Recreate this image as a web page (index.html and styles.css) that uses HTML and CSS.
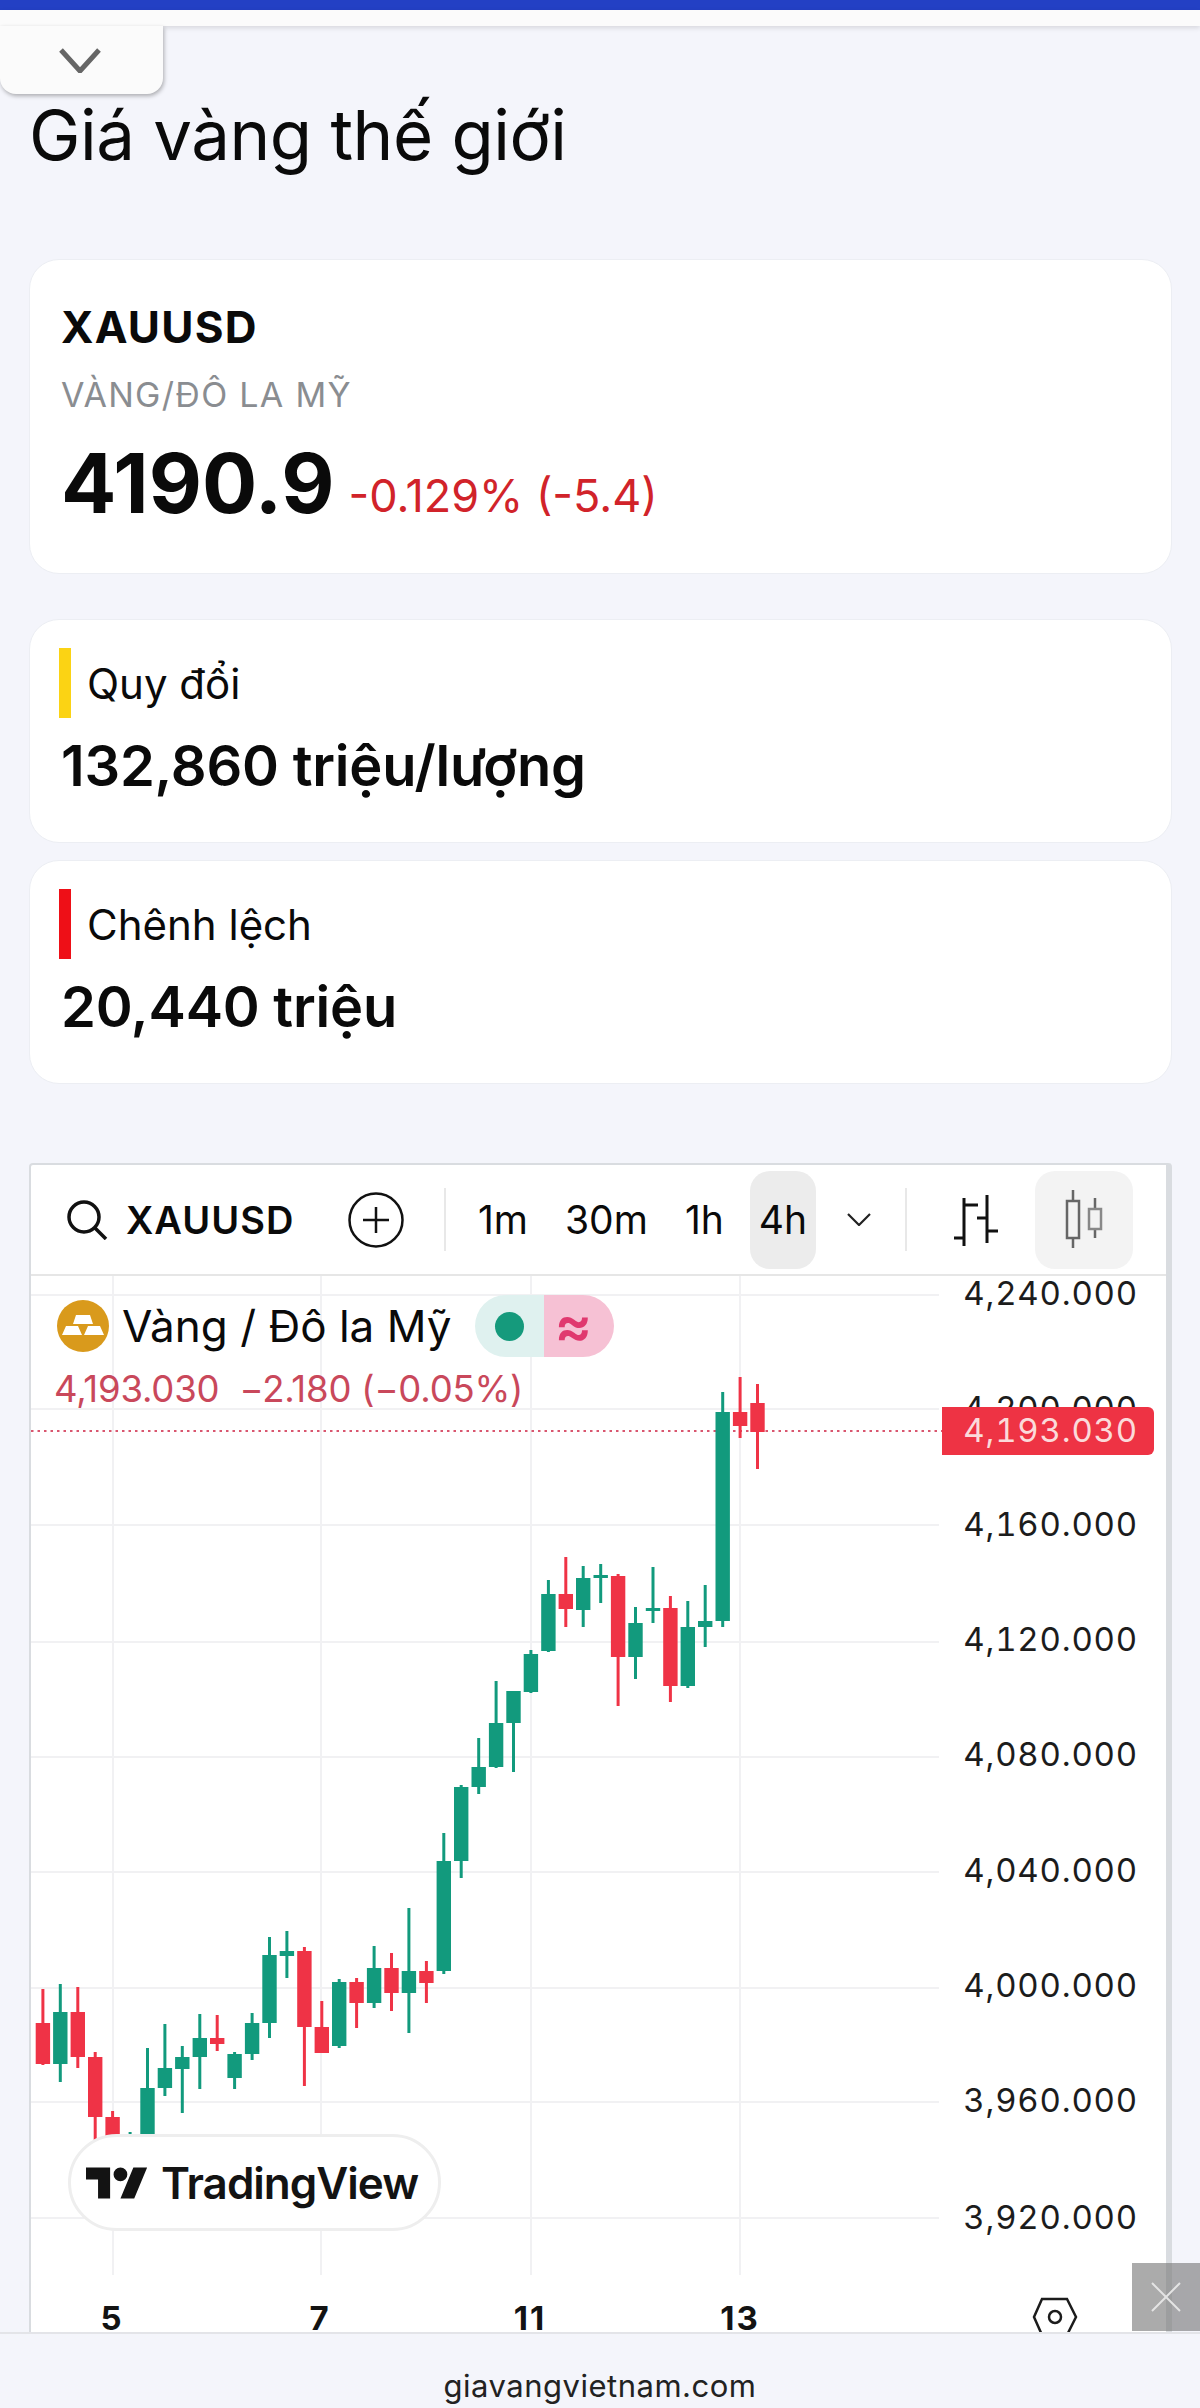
FILE: index.html
```html
<!DOCTYPE html>
<html lang="vi">
<head>
  <meta charset="UTF-8">
  <meta name="viewport" content="width=device-width, initial-scale=1">
  <title>Giá vàng thế giới</title>
  <link rel="stylesheet" href="styles.css">
</head>
<body>
  <div class="top-bar"></div>
  <div class="top-strip"></div>
  <div class="drop-tab">
    <svg width="42" height="25" viewBox="0 0 42 25"><path d="M2 2 L21 23 L40 2" fill="none" stroke="#666" stroke-width="5"/></svg>
  </div>

  <main class="page">
    <h1>Giá vàng thế giới</h1>

    <section class="card quote">
      <div class="symbol">XAUUSD</div>
      <div class="symbol-name">VÀNG/ĐÔ LA MỸ</div>
      <div class="price-row">
        <span class="price">4190.9</span>
        <span class="change">-0.129% (-5.4)</span>
      </div>
    </section>

    <section class="card stat first">
      <div class="stat-label"><span class="mark yellow"></span>Quy đổi</div>
      <div class="stat-value">132,860 triệu/lượng</div>
    </section>

    <section class="card stat">
      <div class="stat-label"><span class="mark red"></span>Chênh lệch</div>
      <div class="stat-value">20,440 triệu</div>
    </section>

    <section class="chart">
      <div class="toolbar">
        <svg class="search-icon" width="42" height="40" viewBox="0 0 42 40"><circle cx="18" cy="17" r="15" fill="none" stroke="#111" stroke-width="3.5"/><path d="M29 28 L40 39" stroke="#111" stroke-width="3.5"/></svg>
        <span class="tb-symbol">XAUUSD</span>
        <svg class="plus-icon" width="56" height="56" viewBox="0 0 56 56"><circle cx="28" cy="28" r="26.5" fill="none" stroke="#111" stroke-width="2.5"/><path d="M15 28 H41 M28 15 V41" stroke="#111" stroke-width="2.5"/></svg>
        <span class="tb-sep sep-one"></span>
        <div class="intervals">
          <span class="iv">1m</span>
          <span class="iv">30m</span>
          <span class="iv">1h</span>
          <span class="iv active">4h</span>
        </div>
        <svg class="iv-more" width="24" height="13" viewBox="0 0 24 13"><path d="M1 1 L12 12 L23 1" fill="none" stroke="#222" stroke-width="2.2"/></svg>
        <span class="tb-sep sep-two"></span>
        <svg class="bars-icon" width="46" height="52" viewBox="0 0 46 52"><path d="M11 4 V52 M11 11 H25 M1 44 H11 M34 1 V49 M24 24 H34 M34 37 H45" fill="none" stroke="#111" stroke-width="3"/></svg>
        <div class="candle-btn">
          <svg width="40" height="60" viewBox="0 0 40 60"><path d="M9 0 V11 M9 48 V58 M31 8 V19 M31 39 V48" fill="none" stroke="#666" stroke-width="2.5"/><rect x="3" y="11" width="12" height="37" fill="none" stroke="#666" stroke-width="2.5"/><rect x="25" y="19" width="12" height="20" fill="none" stroke="#888" stroke-width="2.5"/></svg>
        </div>
      </div>

      <div class="plot">
        <!-- viewBox uses the page's own pixel coordinates -->
        <svg class="plot-svg" width="1135" height="1056" viewBox="31 1276 1135 1056">
          <g class="grid">
            <line x1="113" y1="1276" x2="113" y2="2275"/>
            <line x1="321" y1="1276" x2="321" y2="2275"/>
            <line x1="531" y1="1276" x2="531" y2="2275"/>
            <line x1="740" y1="1276" x2="740" y2="2275"/>
            <line x1="31" y1="1295" x2="939" y2="1295"/>
            <line x1="31" y1="1409" x2="939" y2="1409"/>
            <line x1="31" y1="1525" x2="939" y2="1525"/>
            <line x1="31" y1="1642" x2="939" y2="1642"/>
            <line x1="31" y1="1757" x2="939" y2="1757"/>
            <line x1="31" y1="1872" x2="939" y2="1872"/>
            <line x1="31" y1="1988" x2="939" y2="1988"/>
            <line x1="31" y1="2102" x2="939" y2="2102"/>
            <line x1="31" y1="2218" x2="939" y2="2218"/>
          </g>

          <line class="last-price" x1="31" y1="1431" x2="942" y2="1431"/>

          <g class="dn"><line x1="42.9" y1="1989" x2="42.9" y2="2065"/><rect x="35.7" y="2023" width="14.4" height="41"/></g>
          <g class="up"><line x1="60.3" y1="1984" x2="60.3" y2="2082"/><rect x="53.1" y="2012" width="14.4" height="52"/></g>
          <g class="dn"><line x1="77.8" y1="1987" x2="77.8" y2="2068"/><rect x="70.6" y="2012" width="14.4" height="45"/></g>
          <g class="dn"><line x1="95.2" y1="2052" x2="95.2" y2="2140"/><rect x="88" y="2057" width="14.4" height="60"/></g>
          <g class="dn"><line x1="112.6" y1="2111" x2="112.6" y2="2140"/><rect x="105.4" y="2117" width="14.4" height="23"/></g>
          <g class="up"><line x1="130.1" y1="2132" x2="130.1" y2="2140"/></g>
          <g class="up"><line x1="147.5" y1="2048" x2="147.5" y2="2140"/><rect x="140.3" y="2088" width="14.4" height="52"/></g>
          <g class="up"><line x1="164.9" y1="2024" x2="164.9" y2="2096"/><rect x="157.7" y="2068" width="14.4" height="20"/></g>
          <g class="up"><line x1="182.3" y1="2046" x2="182.3" y2="2113"/><rect x="175.1" y="2057" width="14.4" height="12"/></g>
          <g class="up"><line x1="199.8" y1="2014" x2="199.8" y2="2089"/><rect x="192.6" y="2038" width="14.4" height="19"/></g>
          <g class="dn"><line x1="217.2" y1="2015" x2="217.2" y2="2051"/><rect x="210" y="2038" width="14.4" height="6"/></g>
          <g class="up"><line x1="234.6" y1="2052" x2="234.6" y2="2089"/><rect x="227.4" y="2054" width="14.4" height="24"/></g>
          <g class="up"><line x1="252.1" y1="2013" x2="252.1" y2="2060"/><rect x="244.9" y="2023" width="14.4" height="31"/></g>
          <g class="up"><line x1="269.5" y1="1937" x2="269.5" y2="2038"/><rect x="262.3" y="1955" width="14.4" height="68"/></g>
          <g class="up"><line x1="286.9" y1="1931" x2="286.9" y2="1978"/><rect x="279.7" y="1951" width="14.4" height="5"/></g>
          <g class="dn"><line x1="304.4" y1="1947" x2="304.4" y2="2086"/><rect x="297.2" y="1951" width="14.4" height="76"/></g>
          <g class="dn"><line x1="321.8" y1="2001" x2="321.8" y2="2053"/><rect x="314.6" y="2027" width="14.4" height="26"/></g>
          <g class="up"><line x1="339.2" y1="1979" x2="339.2" y2="2048"/><rect x="332" y="1982" width="14.4" height="64"/></g>
          <g class="dn"><line x1="356.6" y1="1978" x2="356.6" y2="2028"/><rect x="349.4" y="1982" width="14.4" height="21"/></g>
          <g class="up"><line x1="374.1" y1="1946" x2="374.1" y2="2008"/><rect x="366.9" y="1968" width="14.4" height="35"/></g>
          <g class="dn"><line x1="391.5" y1="1953" x2="391.5" y2="2011"/><rect x="384.3" y="1968" width="14.4" height="25"/></g>
          <g class="up"><line x1="408.9" y1="1908" x2="408.9" y2="2033"/><rect x="401.7" y="1971" width="14.4" height="22"/></g>
          <g class="dn"><line x1="426.4" y1="1961" x2="426.4" y2="2003"/><rect x="419.2" y="1971" width="14.4" height="12"/></g>
          <g class="up"><line x1="443.8" y1="1833" x2="443.8" y2="1974"/><rect x="436.6" y="1861" width="14.4" height="110"/></g>
          <g class="up"><line x1="461.2" y1="1785" x2="461.2" y2="1878"/><rect x="454" y="1787" width="14.4" height="74"/></g>
          <g class="up"><line x1="478.7" y1="1738" x2="478.7" y2="1794"/><rect x="471.5" y="1767" width="14.4" height="20"/></g>
          <g class="up"><line x1="496.1" y1="1681" x2="496.1" y2="1768"/><rect x="488.9" y="1723" width="14.4" height="44"/></g>
          <g class="up"><line x1="513.5" y1="1691" x2="513.5" y2="1772"/><rect x="506.3" y="1691" width="14.4" height="32"/></g>
          <g class="up"><line x1="530.9" y1="1650" x2="530.9" y2="1693"/><rect x="523.7" y="1654" width="14.4" height="38"/></g>
          <g class="up"><line x1="548.4" y1="1580" x2="548.4" y2="1652"/><rect x="541.2" y="1594" width="14.4" height="57"/></g>
          <g class="dn"><line x1="565.8" y1="1557" x2="565.8" y2="1627"/><rect x="558.6" y="1594" width="14.4" height="15"/></g>
          <g class="up"><line x1="583.2" y1="1566" x2="583.2" y2="1627"/><rect x="576" y="1578" width="14.4" height="32"/></g>
          <g class="up"><line x1="600.7" y1="1564" x2="600.7" y2="1603"/><rect x="593.5" y="1575" width="14.4" height="3"/></g>
          <g class="dn"><line x1="618.1" y1="1574" x2="618.1" y2="1706"/><rect x="610.9" y="1576" width="14.4" height="81"/></g>
          <g class="up"><line x1="635.5" y1="1607" x2="635.5" y2="1679"/><rect x="628.3" y="1623" width="14.4" height="34"/></g>
          <g class="up"><line x1="653" y1="1567" x2="653" y2="1623"/><rect x="645.8" y="1608" width="14.4" height="3"/></g>
          <g class="dn"><line x1="670.4" y1="1596" x2="670.4" y2="1702"/><rect x="663.2" y="1608" width="14.4" height="78"/></g>
          <g class="up"><line x1="687.8" y1="1601" x2="687.8" y2="1688"/><rect x="680.6" y="1627" width="14.4" height="59"/></g>
          <g class="up"><line x1="705.2" y1="1585" x2="705.2" y2="1647"/><rect x="698" y="1621" width="14.4" height="6"/></g>
          <g class="up"><line x1="722.7" y1="1392" x2="722.7" y2="1627"/><rect x="715.5" y="1412" width="14.4" height="209"/></g>
          <g class="dn"><line x1="740.1" y1="1377" x2="740.1" y2="1438"/><rect x="732.9" y="1412" width="14.4" height="14"/></g>
          <g class="dn"><line x1="757.5" y1="1384" x2="757.5" y2="1469"/><rect x="750.3" y="1403" width="14.4" height="29"/></g>

          <g class="axis-y">
            <text x="1138" y="1305">4,240.000</text>
            <text x="1138" y="1420">4,200.000</text>
            <text x="1138" y="1536">4,160.000</text>
            <text x="1138" y="1651">4,120.000</text>
            <text x="1138" y="1766">4,080.000</text>
            <text x="1138" y="1882">4,040.000</text>
            <text x="1138" y="1997">4,000.000</text>
            <text x="1138" y="2112">3,960.000</text>
            <text x="1138" y="2229">3,920.000</text>
          </g>

          <g class="axis-x">
            <text x="112" y="2330">5</text>
            <text x="320" y="2330">7</text>
            <text x="530" y="2330">11</text>
            <text x="740" y="2330">13</text>
          </g>

          <path class="gear" d="M1042 2299 H1067 L1076 2317 L1067 2335 H1042 L1034 2317 Z"/>
          <circle class="gear" cx="1055" cy="2317" r="6"/>
        </svg>

        <div class="legend">
          <div class="legend-top">
            <svg class="gold-icon" width="52" height="52" viewBox="0 0 52 52">
              <circle cx="26" cy="26" r="26" fill="#d99a1c"/>
              <path d="M19 15 H33 L36 24 H16 Z M9 26 H21 L25 35 H5 Z M31 26 H43 L47 35 H27 Z" fill="#fff"/>
            </svg>
            <span class="legend-title">Vàng / Đô la Mỹ</span>
            <div class="status-pill">
              <span class="pill-left"><i class="dot"></i></span>
              <span class="pill-right">≈</span>
            </div>
          </div>
          <div class="legend-price">4,193.030 &nbsp;−2.180 (−0.05%)</div>
        </div>

        <div class="price-tag">4,193.030</div>

        <div class="tv-badge">
          <svg width="62" height="32" viewBox="0 4 36 18"><path d="M14 22H7V11H0V4h14v18ZM28 22h-8l7.5-18h8L28 22Z M24 8a4 4 0 1 1-8 0a4 4 0 0 1 8 0Z" fill="#131313"/></svg>
          <span>TradingView</span>
        </div>
      </div>
    </section>
  </main>

  <div class="ad-close">
    <svg width="30" height="30" viewBox="0 0 30 30"><path d="M1 1 L29 29 M29 1 L1 29" stroke="#e4e4e4" stroke-width="2"/></svg>
  </div>

  <footer class="footer">giavangvietnam.com</footer>
</body>
</html>
```

FILE: styles.css
```css
/* Reset default margin and padding */
* {
  box-sizing: border-box;
  margin: 0;
  padding: 0;
}

body {
  font-family: Inter, "Liberation Sans", sans-serif;
  background-color: #f4f5fb;
  color: #0a0a0a;
  width: 1200px;
  height: 2408px;
  overflow: hidden;
  position: relative;
}

.top-bar {
  height: 10px;
  background-color: #2340c4;
}

.top-strip {
  height: 16px;
  background-color: #fbfbfb;
  box-shadow: 0 2px 5px rgba(0, 0, 0, 0.12);
}

/* collapsed header tab, sits over the page */
.drop-tab {
  position: absolute;
  left: 0;
  top: 26px;
  width: 163px;
  height: 68px;
  background-color: #fbfbfb;
  border-radius: 0 0 16px 16px;
  box-shadow: 1px 2px 4px rgba(0, 0, 0, 0.3);
  display: flex;
  justify-content: center;
  align-items: center;
  padding-right: 4px;
}

.page {
  padding: 0 28px 0 29px;
}

h1 {
  font-size: 69px;
  font-weight: 400;
  line-height: 80px;
  margin-top: 69px;
  letter-spacing: -0.5px;
}

.card {
  background: white;
  border-radius: 30px;
  border: 1px solid #eceef3;
  padding-left: 31px;
}

.quote {
  margin-top: 84px;
  height: 315px;
}

.symbol {
  font-size: 44px;
  font-weight: 700;
  line-height: 52px;
  margin-top: 41px;
  letter-spacing: 1.2px;
}

.symbol-name {
  font-size: 34px;
  color: #8a8d91;
  line-height: 40px;
  margin-top: 22px;
  letter-spacing: 1.3px;
}

.price-row {
  display: flex;
  align-items: flex-start;
  gap: 14px;
  margin-top: 24px;
}

.price {
  font-size: 82px;
  font-weight: 700;
  line-height: 90px;
}

.change {
  font-size: 45px;
  line-height: 54px;
  margin-top: 30px;
  color: #d1232a;
}

.stat {
  height: 224px;
  margin-top: 17px;
}

.stat.first {
  margin-top: 45px;
}

.stat-label {
  display: flex;
  align-items: center;
  font-size: 42px;
  height: 70px;
  margin-top: 28px;
  margin-left: -2px;
}

.mark {
  width: 12px;
  height: 70px;
  margin-right: 16px;
}

.mark.yellow {
  background-color: #fbd314;
}

.mark.red {
  background-color: #ee0f17;
}

.stat-value {
  font-size: 56px;
  font-weight: 600;
  line-height: 64px;
  margin-top: 16px;
  letter-spacing: -0.2px;
}

.chart {
  margin-top: 79px;
  height: 1169px;
  background: white;
  border: solid #d9dce0;
  border-width: 2px 6px 0 2px;
  border-radius: 4px 4px 0 0;
}

.toolbar {
  height: 111px;
  border-bottom: 2px solid #e6e6e6;
  display: flex;
  align-items: center;
  padding-left: 35px;
  font-size: 39px;
}

.tb-symbol {
  font-weight: 600;
  font-size: 38px;
  margin-left: 18px;
  width: 170px;
  letter-spacing: 1px;
}

.plus-icon {
  margin-left: 52px;
}

.tb-sep {
  width: 2px;
  height: 63px;
  background-color: #e8e8e8;
}

.sep-one {
  margin-left: 40px;
}

.intervals {
  display: flex;
  align-items: center;
  gap: 15px;
  margin-left: 21px;
}

.iv {
  height: 98px;
  line-height: 98px;
  padding: 0 11px;
  border-radius: 20px;
}

.iv.active {
  padding: 0 9px;
  background-color: #ececec;
}

.iv-more {
  margin-left: 31px;
}

.sep-two {
  margin-left: 34px;
}

.bars-icon {
  margin-left: 46px;
}

.candle-btn {
  width: 98px;
  height: 98px;
  margin-left: 36px;
  background-color: #f3f3f3;
  border-radius: 20px;
  display: flex;
  justify-content: center;
  align-items: center;
}

/* chart canvas: everything below is placed over the drawing */
.plot {
  position: relative;
  height: 1056px;
  overflow: hidden;
}

.plot-svg {
  display: block;
}

.grid line {
  stroke: #f1f1f3;
  stroke-width: 2;
}

.last-price {
  stroke: #d9566f;
  stroke-width: 2;
  stroke-dasharray: 2.5 4;
}

.up line,
.dn line {
  stroke-width: 3;
}

.up line {
  stroke: #129a7d;
}

.up rect {
  fill: #129a7d;
}

.dn line {
  stroke: #ef3346;
}

.dn rect {
  fill: #ef3346;
}

.axis-y text {
  font-size: 33px;
  font-variant-numeric: tabular-nums;
  letter-spacing: 0.8px;
  text-anchor: end;
  fill: #1c1c1c;
}

.axis-x text {
  font-size: 33px;
  font-weight: 700;
  letter-spacing: 2px;
  text-anchor: middle;
  fill: #131313;
}

.gear {
  fill: none;
  stroke: #1c1c1c;
  stroke-width: 2.5;
}

.legend {
  position: absolute;
  left: 26px;
  top: 19px;
}

.legend-top {
  display: flex;
  align-items: center;
}

.legend-title {
  font-size: 44px;
  margin-left: 13px;
}

.status-pill {
  display: flex;
  height: 62px;
  margin-left: 24px;
  border-radius: 31px;
  overflow: hidden;
}

.pill-left {
  width: 69px;
  background-color: #dff1ef;
  display: flex;
  align-items: center;
  justify-content: center;
}

.dot {
  width: 29px;
  height: 29px;
  border-radius: 50%;
  background-color: #159a7c;
}

.pill-right {
  width: 70px;
  padding-right: 12px;
  background-color: #f6c1d4;
  color: #e0396f;
  font-size: 56px;
  font-weight: 600;
  line-height: 60px;
  text-align: center;
}

.legend-price {
  font-size: 36.5px;
  color: #c9485b;
  margin-top: 10px;
  margin-left: -3px;
  letter-spacing: -0.2px;
}

.price-tag {
  position: absolute;
  left: 911px;
  top: 131px;
  width: 212px;
  height: 48px;
  background-color: #ee3344;
  color: #fbdada;
  border-radius: 0 6px 6px 0;
  font-size: 33px;
  font-variant-numeric: tabular-nums;
  letter-spacing: 0.8px;
  line-height: 46px;
  text-align: right;
  padding-right: 16px;
}

.tv-badge {
  position: absolute;
  left: 37px;
  top: 858px;
  width: 373px;
  height: 97px;
  background: white;
  border: 3px solid #eeeeee;
  border-radius: 49px;
  display: flex;
  align-items: center;
  padding-left: 15px;
  gap: 13px;
  font-size: 44px;
  font-weight: 600;
  letter-spacing: -1px;
  color: #131313;
}

.ad-close {
  position: absolute;
  left: 1132px;
  top: 2263px;
  width: 68px;
  height: 68px;
  background-color: rgba(120, 120, 120, 0.62);
  display: flex;
  justify-content: center;
  align-items: center;
}

.footer {
  height: 76px;
  border-top: 2px solid #e3e4e8;
  text-align: center;
  font-size: 31px;
  line-height: 44px;
  padding-top: 30px;
  color: #222;
  letter-spacing: 0.5px;
}
```
